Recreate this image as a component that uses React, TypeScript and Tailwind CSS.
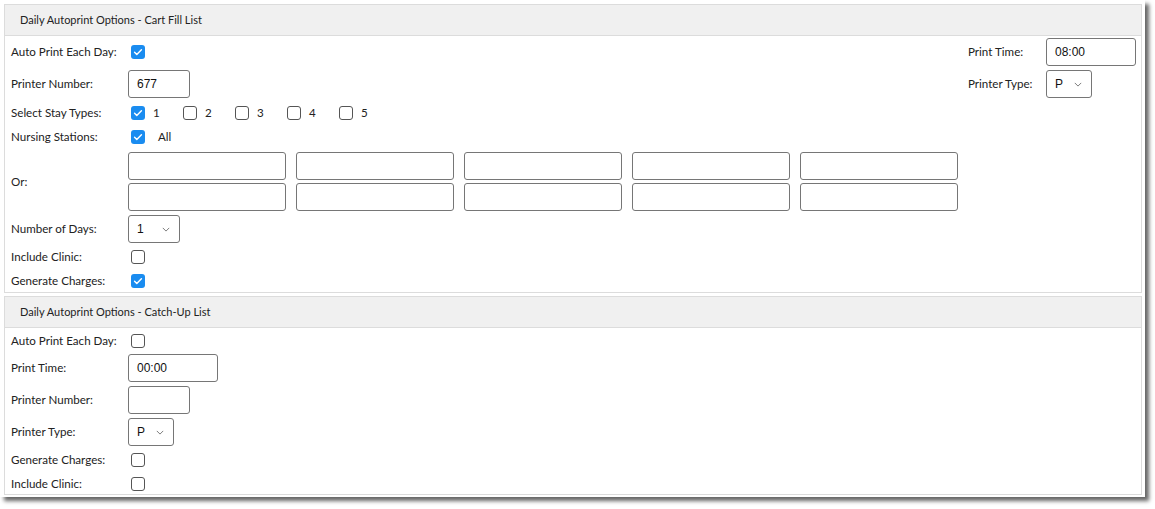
import React from 'react';

const labelFont = { fontFamily: 'Lato, "Liberation Sans", sans-serif' };

function Check({ checked }: { checked?: boolean }) {
  if (checked) {
    return (
      <span className="ml-[3px] flex h-[14px] w-[14px] items-center justify-center rounded-[3px] bg-[#1a8cf0]">
        <svg viewBox="0 0 14 14" className="h-[12px] w-[12px]">
          <path d="M3 7.2l2.6 2.6L11 4.4" fill="none" stroke="#fff" strokeWidth="1.7" strokeLinecap="round" strokeLinejoin="round" />
        </svg>
      </span>
    );
  }
  return <span className="ml-[3px] block h-[14px] w-[14px] rounded-[3px] border border-[#555] bg-white" />;
}

function TextBox({ value, w }: { value?: string; w: string }) {
  return (
    <div
      className={`flex h-[28px] ${w} items-center rounded-[3px] border border-[#767676] bg-white pl-[8px] text-[12px] text-[#111]`}
      style={{ fontFamily: '"Liberation Sans", Arial, sans-serif' }}
    >
      {value}
    </div>
  );
}

function Select({ value, w }: { value: string; w: string }) {
  return (
    <div
      className={`flex h-[28px] ${w} items-center justify-between rounded-[3px] border border-[#767676] bg-white pl-[8px] pr-[9px] text-[12px] text-[#111]`}
      style={{ fontFamily: '"Liberation Sans", Arial, sans-serif' }}
    >
      <span>{value}</span>
      <svg viewBox="0 0 10 6" className="h-[5px] w-[8px]">
        <path d="M1 1l4 4 4-4" fill="none" stroke="#777" strokeWidth="1.2" />
      </svg>
    </div>
  );
}

function Row({ label, h, children }: { label: string; h: string; children?: React.ReactNode }) {
  return (
    <div className={`flex ${h} items-center`}>
      <div className="w-[117px] shrink-0 text-[11.6px] text-[#222]">{label}</div>
      {children}
    </div>
  );
}

function Header({ title }: { title: string }) {
  return (
    <div className="flex h-[31px] items-center border-b border-[#dcdcdc] bg-[#f0f0f0] pl-[15px] text-[11px] text-[#222]">
      {title}
    </div>
  );
}

export default function App() {
  const stays = [
    { n: '1', on: true },
    { n: '2' },
    { n: '3' },
    { n: '4' },
    { n: '5' },
  ];

  return (
    <div className="h-[509px] w-[1155px] bg-white" style={labelFont}>
      <div className="flex h-[497px] w-[1145px] flex-col gap-[3px] bg-white pl-[4px] pr-[3px] pt-[4px] shadow-[4px_4px_4px_rgba(0,0,0,0.6)]">
        {/* Cart Fill List */}
        <div className="border border-[#dcdcdc]">
          <Header title="Daily Autoprint Options - Cart Fill List" />
          <div className="pl-[6px] pr-[5px]">
            <div className="flex h-[31px] items-center">
              <Row label="Auto Print Each Day:" h="h-[31px]">
                <Check checked />
              </Row>
              <div className="ml-auto flex items-center">
                <div className="w-[78px] text-[11.6px] text-[#222]">Print Time:</div>
                <TextBox value="08:00" w="w-[90px]" />
              </div>
            </div>
            <div className="flex h-[34px] items-center">
              <Row label="Printer Number:" h="h-[34px]">
                <TextBox value="677" w="w-[62px]" />
              </Row>
              <div className="ml-auto flex w-[168px] items-center">
                <div className="w-[78px] text-[11.6px] text-[#222]">Printer Type:</div>
                <Select value="P" w="w-[46px]" />
              </div>
            </div>
            <Row label="Select Stay Types:" h="h-[24px]">
              <div className="flex items-center gap-[18px]">
                {stays.map((s) => (
                  <div key={s.n} className="flex w-[34px] items-center gap-[8px] text-[11.6px] text-[#222]">
                    <Check checked={s.on} />
                    <span>{s.n}</span>
                  </div>
                ))}
              </div>
            </Row>
            <Row label="Nursing Stations:" h="h-[24px]">
              <div className="flex items-center gap-[13px] text-[11.6px] text-[#222]">
                <Check checked />
                <span>All</span>
              </div>
            </Row>
            <Row label="Or:" h="h-[65px]">
              <div className="grid grid-cols-[repeat(5,158px)] gap-x-[10px] gap-y-[3px]">
                {Array.from({ length: 10 }).map((_, i) => (
                  <TextBox key={i} w="w-[158px]" />
                ))}
              </div>
            </Row>
            <Row label="Number of Days:" h="h-[30px]">
              <Select value="1" w="w-[52px]" />
            </Row>
            <Row label="Include Clinic:" h="h-[26px]">
              <Check />
            </Row>
            <Row label="Generate Charges:" h="h-[22px]">
              <Check checked />
            </Row>
          </div>
        </div>

        {/* Catch-Up List */}
        <div className="border border-[#dcdcdc]">
          <Header title="Daily Autoprint Options - Catch-Up List" />
          <div className="pl-[6px] pr-[5px]">
            <Row label="Auto Print Each Day:" h="h-[25px]">
              <Check />
            </Row>
            <Row label="Print Time:" h="h-[30px]">
              <TextBox value="00:00" w="w-[90px]" />
            </Row>
            <Row label="Printer Number:" h="h-[34px]">
              <TextBox w="w-[62px]" />
            </Row>
            <Row label="Printer Type:" h="h-[30px]">
              <Select value="P" w="w-[46px]" />
            </Row>
            <Row label="Generate Charges:" h="h-[26px]">
              <Check />
            </Row>
            <Row label="Include Clinic:" h="h-[21px]">
              <Check />
            </Row>
          </div>
        </div>
      </div>
    </div>
  );
}
